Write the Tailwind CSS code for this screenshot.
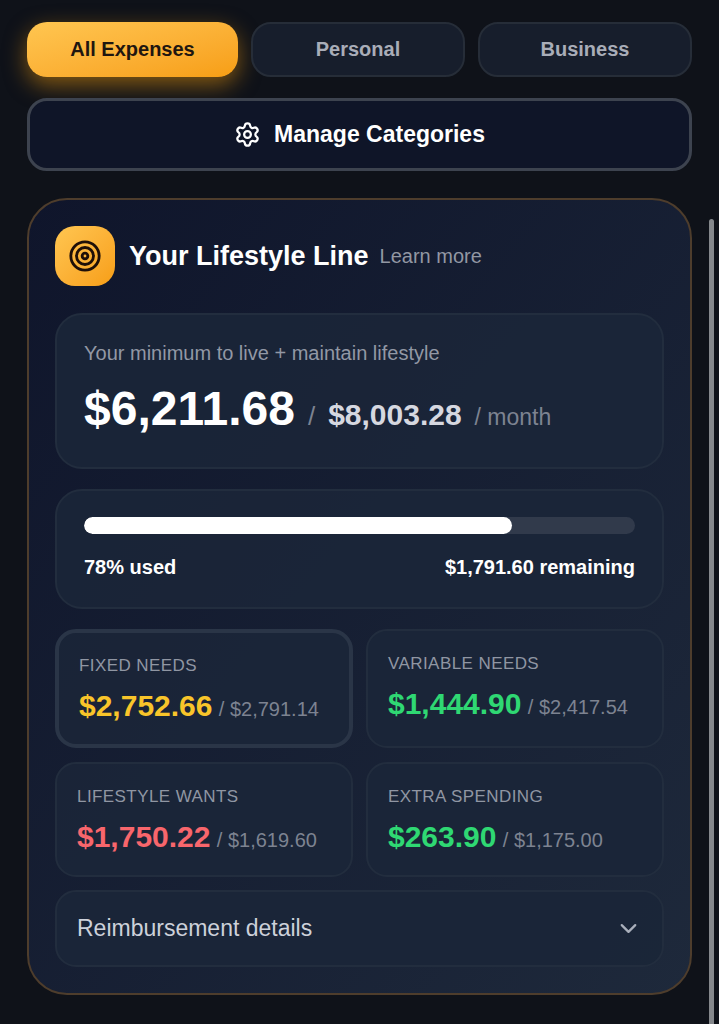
<!DOCTYPE html>
<html lang="en">
<head>
<meta charset="UTF-8">
<meta name="viewport" content="width=device-width, initial-scale=1.0">
<title>Expenses</title>
<script src="https://cdn.jsdelivr.net/npm/@tailwindcss/browser@4"></script>
</head>
<body class="relative min-h-screen bg-[#0f1219] font-['Liberation_Sans',Arial,sans-serif] text-white">
<main class="px-[27px] pt-[22px] pb-7">
<nav class="grid grid-cols-[211fr_214fr_214fr] gap-[13px] text-xl font-bold">
<button class="h-[55px] rounded-[20px] bg-linear-to-br from-[#ffc650] to-[#f79e12] pb-0.5 text-[#1f1610] shadow-[0_8px_22px_rgba(245,158,11,0.5)]">All Expenses</button>
<button class="h-[55px] rounded-[20px] border-2 border-[#262d38] bg-[#171e2c] pb-0.5 text-[#a9adb8]">Personal</button>
<button class="h-[55px] rounded-[20px] border-2 border-[#262d38] bg-[#171e2c] pb-0.5 text-[#a9adb8]">Business</button>
</nav>
<button class="relative mt-[21px] flex h-[73px] w-full items-center justify-center gap-[13px] rounded-[20px] border-3 border-[#3d434f] bg-[#0f1528] text-[23px] font-bold">
<svg class="size-[27px]" viewBox="0 0 24 24" fill="none" stroke="currentColor" stroke-width="2" stroke-linecap="round" stroke-linejoin="round" aria-hidden="true">
<path d="M9.671 4.136a2.34 2.34 0 0 1 4.659 0 2.34 2.34 0 0 0 3.319 1.915 2.34 2.34 0 0 1 2.33 4.033 2.34 2.34 0 0 0 0 3.831 2.34 2.34 0 0 1-2.33 4.033 2.34 2.34 0 0 0-3.319 1.915 2.34 2.34 0 0 1-4.659 0 2.34 2.34 0 0 0-3.32-1.915 2.34 2.34 0 0 1-2.33-4.033 2.34 2.34 0 0 0 0-3.831A2.34 2.34 0 0 1 6.35 6.051a2.34 2.34 0 0 0 3.319-1.915"/>
<circle cx="12" cy="12" r="3"/>
</svg>
Manage Categories
</button>

<section class="mt-[27px] rounded-[40px] border-2 border-[#4e3d2c] bg-linear-to-br from-[#0f152b] to-[#1e293b] p-[26px]">
<header class="flex items-center gap-[14px]">
<div class="flex size-[60px] items-center justify-center rounded-[20px] bg-linear-to-br from-[#ffc650] to-[#f79e12] text-[#1f0f08]">
<svg class="size-[34px]" viewBox="0 0 24 24" fill="none" stroke="currentColor" stroke-width="2" aria-hidden="true">
<circle cx="12" cy="12" r="10"/>
<circle cx="12" cy="12" r="6"/>
<circle cx="12" cy="12" r="2"/>
</svg>
</div>
<div class="flex items-center gap-[11px]">
<h1 class="text-[27px] font-bold">Your Lifestyle Line</h1>
<a href="#learn" class="text-xl text-[#9297a3]">Learn more</a>
</div>
</header>

<div class="mt-[27px] rounded-[27px] border-2 border-[#222d3e] bg-[#1b2639]/90 px-[27px] py-[26px]">
<p class="text-xl leading-[25px] text-[#9298a5]">Your minimum to live + maintain lifestyle</p>
<div class="mt-[11px] flex items-baseline gap-[13px]">
<span class="text-5xl leading-[64px] font-bold">$6,211.68</span>
<span class="text-[26px] leading-none text-[#7d8391]">/</span>
<span class="text-3xl leading-none font-bold text-[#d6d8e0]">$8,003.28</span>
<span class="text-[23px] leading-none text-[#7d8391]">/ month</span>
</div>
</div>

<div class="mt-5 rounded-[27px] border-2 border-[#222d3e] bg-[#1b2639]/90 px-[27px] py-[26px]">
<div class="h-[17px] overflow-hidden rounded-full bg-[#313a4b]" role="progressbar" aria-label="Budget used" aria-valuenow="78" aria-valuemin="0" aria-valuemax="100">
<div class="h-full rounded-full bg-white" style="width: 77.6%"></div>
</div>
<div class="mt-[19px] flex justify-between text-xl leading-7 font-bold">
<span>78% used</span>
<span>$1,791.60 remaining</span>
</div>
</div>

<div class="mt-5 grid grid-cols-2 gap-x-[13px] gap-y-[14px]">
<div class="rounded-[21px] border-4 border-[#2a3547] bg-[#1b2639]/90 px-5 pt-5 pb-4">
<h2 class="text-[17px] leading-[25px] tracking-wide text-[#9096a3] uppercase">Fixed Needs</h2>
<p class="mt-1.5 text-3xl leading-11 font-bold text-[#f9c52a]">$2,752.66 <span class="-ml-0.5 text-xl leading-none font-normal text-[#7d8391]">/ $2,791.14</span></p>
</div>
<div class="rounded-[21px] border-2 border-[#222d3e] bg-[#1b2639]/90 px-5 pt-5 pb-4">
<h2 class="text-[17px] leading-[25px] tracking-wide text-[#9096a3] uppercase">Variable Needs</h2>
<p class="mt-1.5 text-3xl leading-11 font-bold text-[#2fd873]">$1,444.90 <span class="-ml-0.5 text-xl leading-none font-normal text-[#7d8391]">/ $2,417.54</span></p>
</div>
<div class="rounded-[21px] border-2 border-[#222d3e] bg-[#1b2639]/90 px-5 pt-5 pb-4">
<h2 class="text-[17px] leading-[25px] tracking-wide text-[#9096a3] uppercase">Lifestyle Wants</h2>
<p class="mt-1.5 text-3xl leading-11 font-bold text-[#f8666c]">$1,750.22 <span class="-ml-0.5 text-xl leading-none font-normal text-[#7d8391]">/ $1,619.60</span></p>
</div>
<div class="rounded-[21px] border-2 border-[#222d3e] bg-[#1b2639]/90 px-5 pt-5 pb-4">
<h2 class="text-[17px] leading-[25px] tracking-wide text-[#9096a3] uppercase">Extra Spending</h2>
<p class="mt-1.5 text-3xl leading-11 font-bold text-[#2fd873]">$263.90 <span class="-ml-0.5 text-xl leading-none font-normal text-[#7d8391]">/ $1,175.00</span></p>
</div>
</div>

<button class="mt-[13px] flex h-[77px] w-full items-center justify-between rounded-[21px] border-2 border-[#222d3e] bg-[#1b2639]/90 px-5 text-[23px] text-[#cdd1da]" aria-expanded="false">
Reimbursement details
<svg class="size-[27px] text-[#a9afbb]" viewBox="0 0 24 24" fill="none" stroke="currentColor" stroke-width="2" stroke-linecap="round" stroke-linejoin="round" aria-hidden="true">
<path d="m6 9 6 6 6-6"/>
</svg>
</button>
</section>
</main>
<!-- scroll thumb -->
<div class="absolute top-[219px] right-[5px] bottom-0 w-[5px] rounded-t-full bg-[#85888c]"></div>
</body>
</html>
